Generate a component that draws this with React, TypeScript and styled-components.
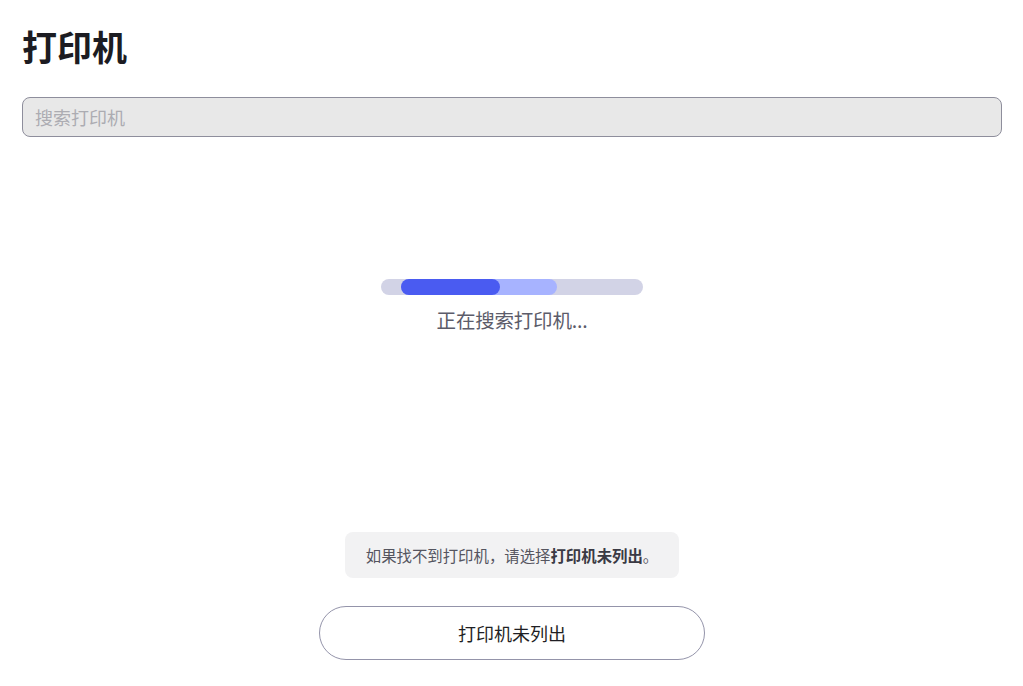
import React from "react";
import styled, { createGlobalStyle } from "styled-components";

const Global = createGlobalStyle`
  html, body { margin: 0; padding: 0; background: #ffffff; }
  body { font-family: "Noto Sans CJK SC", "Noto Sans", sans-serif; }
  * { box-sizing: border-box; }
`;

const Page = styled.div`
  width: 1023px;
  height: 686px;
  display: flex;
  flex-direction: column;
  padding: 22px 21px 26px 22px;
`;

const Title = styled.h1`
  margin: 0;
  font-size: 35px;
  line-height: 48px;
  font-weight: 700;
  color: #1c1c22;
`;

const Search = styled.input`
  margin-top: 27px;
  height: 40px;
  width: 100%;
  border: 1.5px solid #8e8e9c;
  border-radius: 8px;
  background: #e8e8e8;
  padding: 0 12px;
  font-family: inherit;
  font-size: 18px;
  color: #333;
  outline: none;
  &::placeholder { color: #acacb2; }
`;

const Center = styled.div`
  flex: 1;
  display: flex;
  flex-direction: column;
  align-items: center;
  padding-top: 142px;
`;

const Track = styled.div`
  position: relative;
  width: 262px;
  height: 16px;
  border-radius: 8px;
  background: #d2d3e6;
  overflow: hidden;
`;

const Seg = styled.div<{ $color: string }>`
  position: absolute;
  top: 0;
  bottom: 0;
  border-radius: 8px;
  background: ${(p) => p.$color};
`;

const Status = styled.div`
  margin-top: 11px;
  font-size: 19.5px;
  line-height: 28px;
  color: #5c5c6a;
  letter-spacing: -0.2px;
`;

const Bottom = styled.div`
  display: flex;
  flex-direction: column;
  align-items: center;
  gap: 28px;
`;

const Hint = styled.div`
  height: 46px;
  padding: 0 21px;
  display: flex;
  align-items: center;
  border-radius: 8px;
  background: #f2f2f3;
  font-size: 15.4px;
  color: #55555f;
  b { font-weight: 700; color: #3a3a44; }
`;

const Button = styled.button`
  width: 386px;
  height: 54px;
  border-radius: 27px;
  border: 1.5px solid #9494aa;
  background: #ffffff;
  font-family: inherit;
  font-size: 18px;
  color: #1f1f24;
  cursor: pointer;
`;

export default function App() {
  return (
    <>
      <Global />
      <Page>
        <Title>打印机</Title>
        <Search placeholder="搜索打印机" />
        <Center>
          <Track>
            <Seg $color="#a7b3ff" style={{ left: 20, width: 156 }} />
            <Seg $color="#4a5bf1" style={{ left: 20, width: 99 }} />
          </Track>
          <Status>正在搜索打印机...</Status>
        </Center>
        <Bottom>
          <Hint>
            <span>
              如果找不到打印机，请选择<b>打印机未列出</b>。
            </span>
          </Hint>
          <Button>打印机未列出</Button>
        </Bottom>
      </Page>
    </>
  );
}
